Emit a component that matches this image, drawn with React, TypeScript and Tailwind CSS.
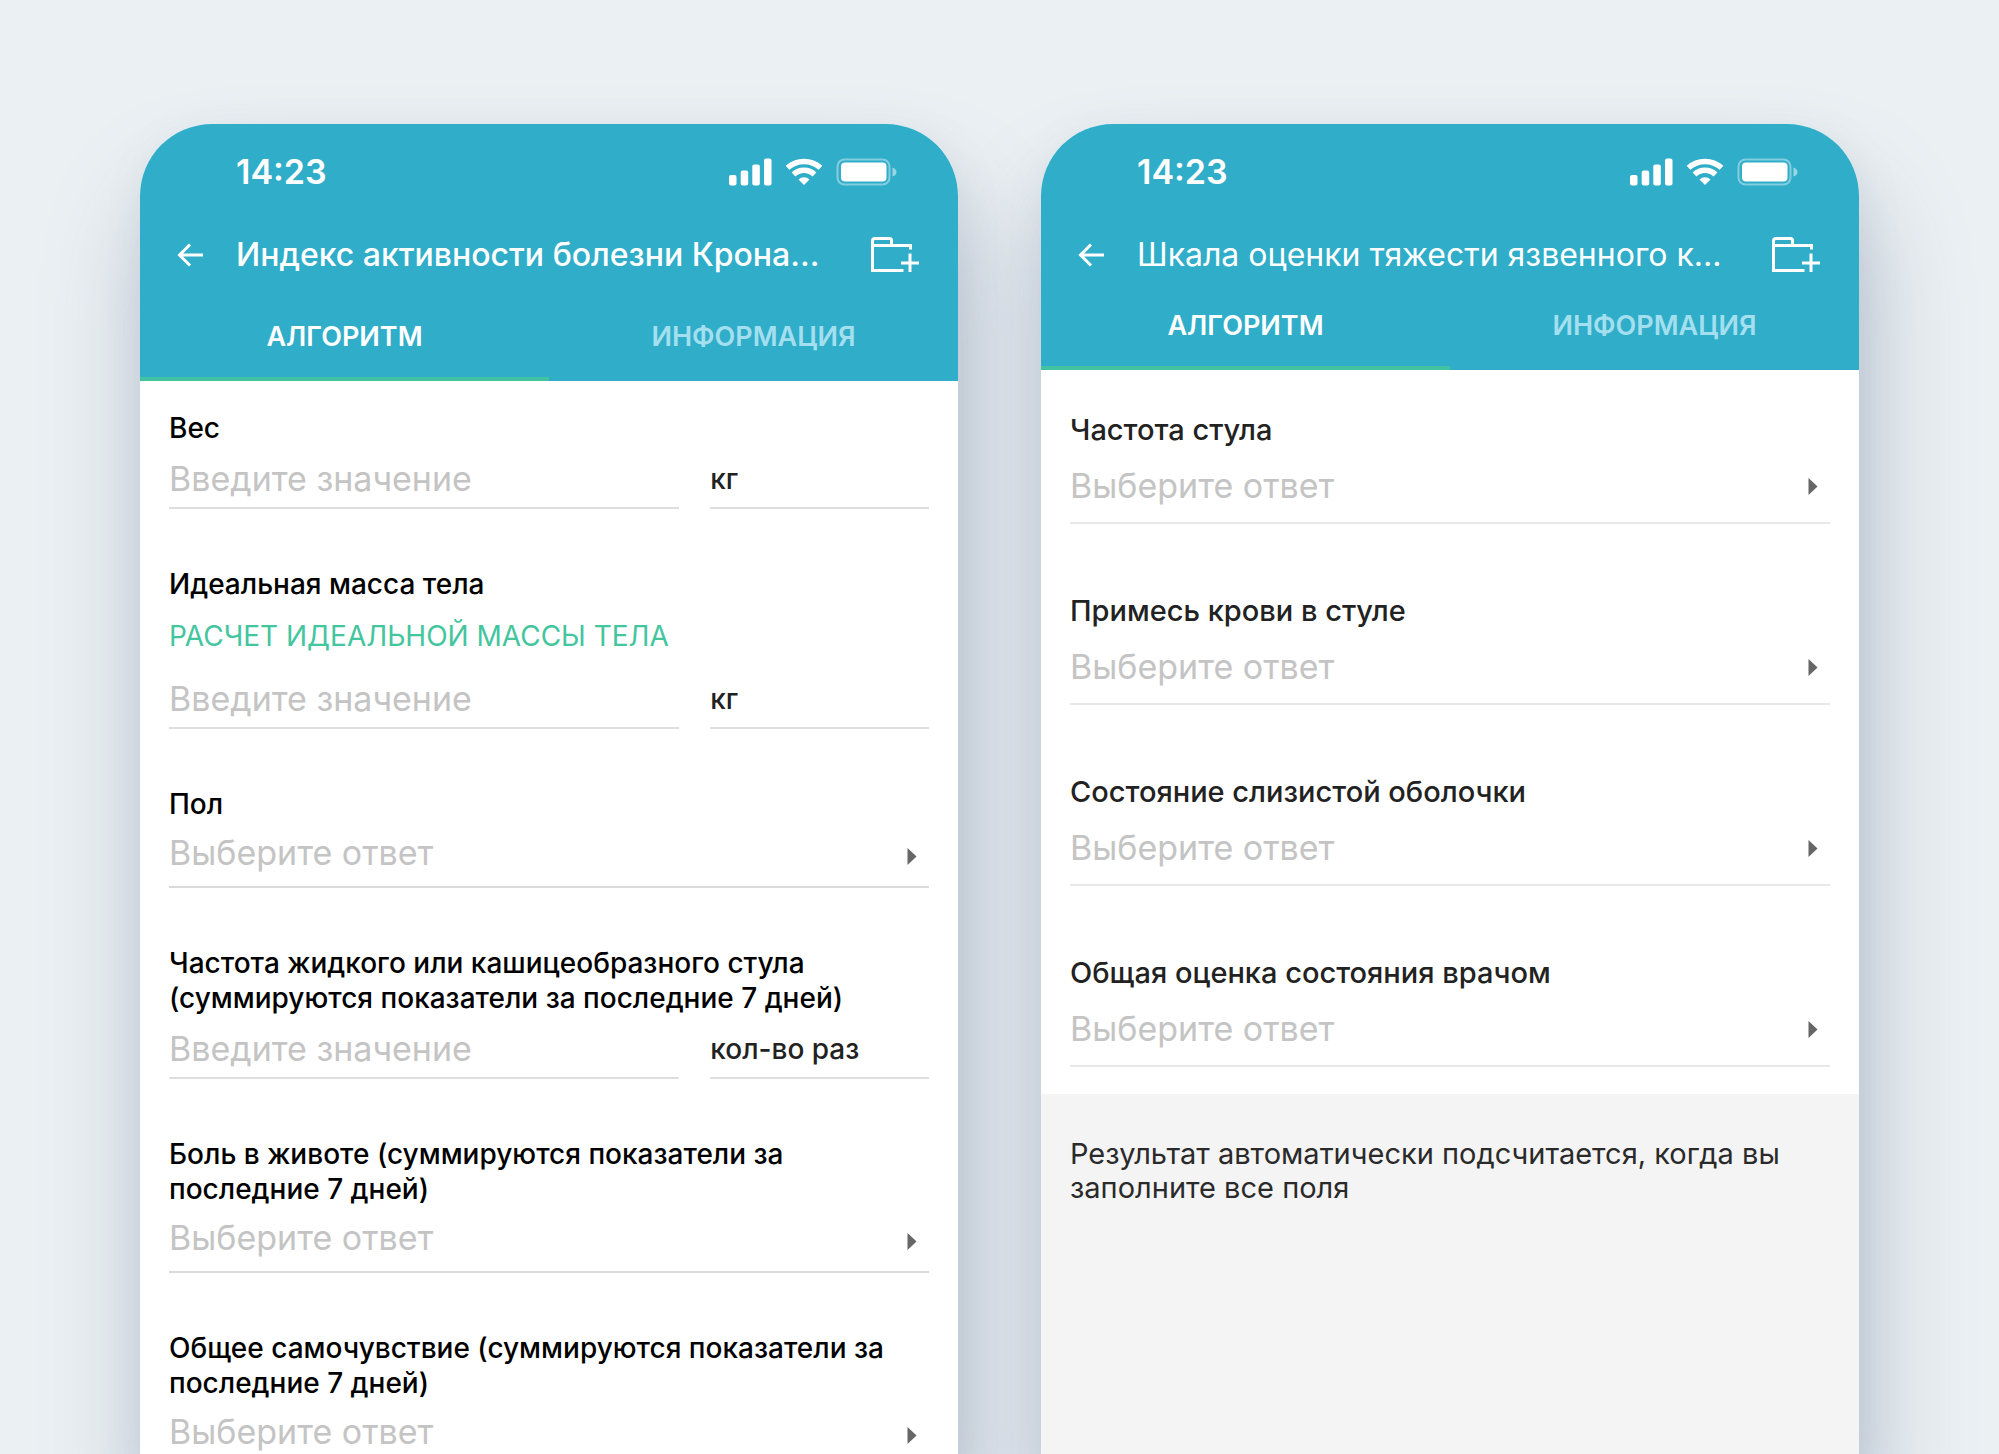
import { useId, type ReactNode } from "react";

function StatusIcons() {
  return (
    <svg width="168" height="28" viewBox="0 0 168 28" fill="#fff" aria-hidden="true">
      <rect x="0" y="17" width="7.500" height="10.500" rx="2" />
      <rect x="11.700" y="12.500" width="7.500" height="15" rx="2" />
      <rect x="23.300" y="6.500" width="7.500" height="21" rx="2" />
      <rect x="35" y=".5" width="7.500" height="27" rx="2" />
      <g fill="none" stroke="#fff" strokeWidth="5.500">
        <path d="M58.500 9.800a24.500 24.500 0 0 1 33 0" />
        <path d="M64.500 16.500a15 15 0 0 1 21 0" />
      </g>
      <path d="M69.500 21.500a8 8 0 0 1 11 0L75 27Z" />
      <rect x="108.500" y="1.500" width="52" height="25" rx="7" fill="none" stroke="#fff" strokeOpacity=".4" strokeWidth="2" />
      <rect x="112" y="4.500" width="45.500" height="19" rx="4" />
      <path d="M163.500 9.500q4 1.500 4 4.500t-4 4.500Z" fillOpacity=".5" />
    </svg>
  );
}

function BackIcon() {
  return (
    <svg width="26" height="24" viewBox="0 0 26 24" fill="none" stroke="#fff" strokeWidth="3" aria-hidden="true">
      <path d="M26 12H2.500M13 1.500 2.500 12 13 22.500" />
    </svg>
  );
}

function FolderPlusIcon() {
  return (
    <svg width="48" height="36" viewBox="0 0 48 36" fill="none" stroke="#fff" strokeWidth="3" aria-hidden="true">
      <path d="M32.500 33.500H1.500V4q0-2.500 2.500-2.500H18.500q2 0 2 2V8.500M1.500 8.500H39.500V12.500M39 16.500V35M30 26H48" />
    </svg>
  );
}

type HeaderProps = { title: string; regular?: boolean };

function Header({ title, regular }: HeaderProps) {
  const tab = regular ? "pt-[34px]" : "pt-[45px]";
  return (
    <header className="bg-[#30adc8] pt-7 text-white">
      <div className="flex h-10 items-center justify-between pr-[61px] pl-24">
        <span className="text-[34px] leading-10 font-semibold">14:23</span>
        <StatusIcons />
      </div>
      <div className="mt-[43px] flex h-10 items-center pr-[39px] pl-[37px]">
        <button type="button" aria-label="Назад" className="shrink-0">
          <BackIcon />
        </button>
        <h1 className={`ml-[33px] flex-1 whitespace-nowrap text-[32px] leading-10 ${regular ? "" : "font-medium"}`}>
          {title}
        </h1>
        <button type="button" aria-label="Добавить в папку" className="shrink-0">
          <FolderPlusIcon />
        </button>
      </div>
      <div role="tablist" className="grid grid-cols-2 text-[27px] leading-[34px] font-semibold">
        <button type="button" role="tab" aria-selected="true" className={`border-b-4 border-[#41c3a1] pb-[23px] ${tab}`}>
          АЛГОРИТМ
        </button>
        <button type="button" role="tab" aria-selected="false" className={`border-b-4 border-transparent pb-[23px] text-[#a3dfef] ${tab}`}>
          ИНФОРМАЦИЯ
        </button>
      </div>
    </header>
  );
}

function NumberField({ label, unit, children }: { label: string; unit: string; children?: ReactNode }) {
  const id = useId();
  return (
    <div>
      <label htmlFor={id} className="block text-[28px] leading-[35px] font-medium">
        {label}
      </label>
      {children}
      <div className="grid grid-cols-[7fr_3fr] gap-[31px]">
        <input
          id={id}
          type="text"
          inputMode="decimal"
          placeholder="Введите значение"
          className="h-[63px] w-full min-w-0 border-b-2 border-[#dedede] pt-[11px] pb-2 text-[34px] leading-10 outline-none placeholder:text-[#c4c4c4]"
        />
        <span className="h-[63px] border-b-2 border-[#dedede] pt-4 text-[28px] leading-[35px] font-medium text-[#222]">
          {unit}
        </span>
      </div>
    </div>
  );
}

function SelectField({ label, roomy }: { label: string; roomy?: boolean }) {
  const id = useId();
  return (
    <div>
      <label
        htmlFor={id}
        className={`block leading-[35px] font-medium ${roomy ? "text-[29px] text-[#222]" : "text-[28px]"}`}
      >
        {label}
      </label>
      <div className="relative">
        <select
          id={id}
          className={`block w-full appearance-none border-b-2 bg-transparent text-[34px] leading-10 text-[#c4c4c4] outline-none ${
            roomy ? "border-[#e8e8e8] pt-[19px] pb-4" : "border-[#dadada] pt-[11px] pb-[13px]"
          }`}
        >
          <option>Выберите ответ</option>
        </select>
        <svg
          className={`pointer-events-none absolute right-3 ${roomy ? "top-[31px]" : "top-[26px]"}`}
          width="10"
          height="17"
          viewBox="0 0 10 17"
          fill="#666"
          aria-hidden="true"
        >
          <path d="M.5 0 9.500 8.500.5 17Z" />
        </svg>
      </div>
    </div>
  );
}

function Phone({ className, children }: { className: string; children: ReactNode }) {
  return (
    <section className="rounded-t-[72px] shadow-[8px_70px_100px_rgba(115,132,165,0.46),4px_10px_40px_rgba(120,140,150,0.12)]">
      <div className={`flex h-full flex-col overflow-hidden rounded-t-[72px] ${className}`}>{children}</div>
    </section>
  );
}

export default function App() {
  return (
    <main className="grid h-screen grid-cols-2 gap-[83px] overflow-hidden bg-[#ebf0f3] px-[140px] pt-[124px] font-[Inter,sans-serif] text-black">
      <Phone className="relative bg-white">
        <Header title="Индекс активности болезни Крона..." />
        <form className="flex flex-col gap-[58px] px-[29px] pt-[30px]">
          <NumberField label="Вес" unit="кг" />
          <NumberField label="Идеальная масса тела" unit="кг">
            <a href="#ideal-mass" className="mt-[17px] mb-3 block text-[28px] leading-[35px] text-[#43c59e]">
              РАСЧЕТ ИДЕАЛЬНОЙ МАССЫ ТЕЛА
            </a>
          </NumberField>
          <SelectField label="Пол" />
          <NumberField
            label="Частота жидкого или кашицеобразного стула (суммируются показатели за последние 7 дней)"
            unit="кол-во раз"
          />
          <SelectField label="Боль в животе (суммируются показатели за последние 7 дней)" />
          <SelectField label="Общее самочувствие (суммируются показатели за последние 7 дней)" />
        </form>
      </Phone>

      <Phone className="relative bg-[#f4f4f4]">
        <Header title="Шкала оценки тяжести язвенного к..." regular />
        <form className="flex flex-col gap-[69px] bg-white px-[29px] pt-[42px] pb-[27px]">
          <SelectField label="Частота стула" roomy />
          <SelectField label="Примесь крови в стуле" roomy />
          <SelectField label="Состояние слизистой оболочки" roomy />
          <SelectField label="Общая оценка состояния врачом" roomy />
        </form>
        <p className="px-[29px] pt-[43px] text-[29px] leading-[34px] text-[#2a2a2a]">
          Результат автоматически подсчитается, когда вы заполните все поля
        </p>
      </Phone>
    </main>
  );
}
